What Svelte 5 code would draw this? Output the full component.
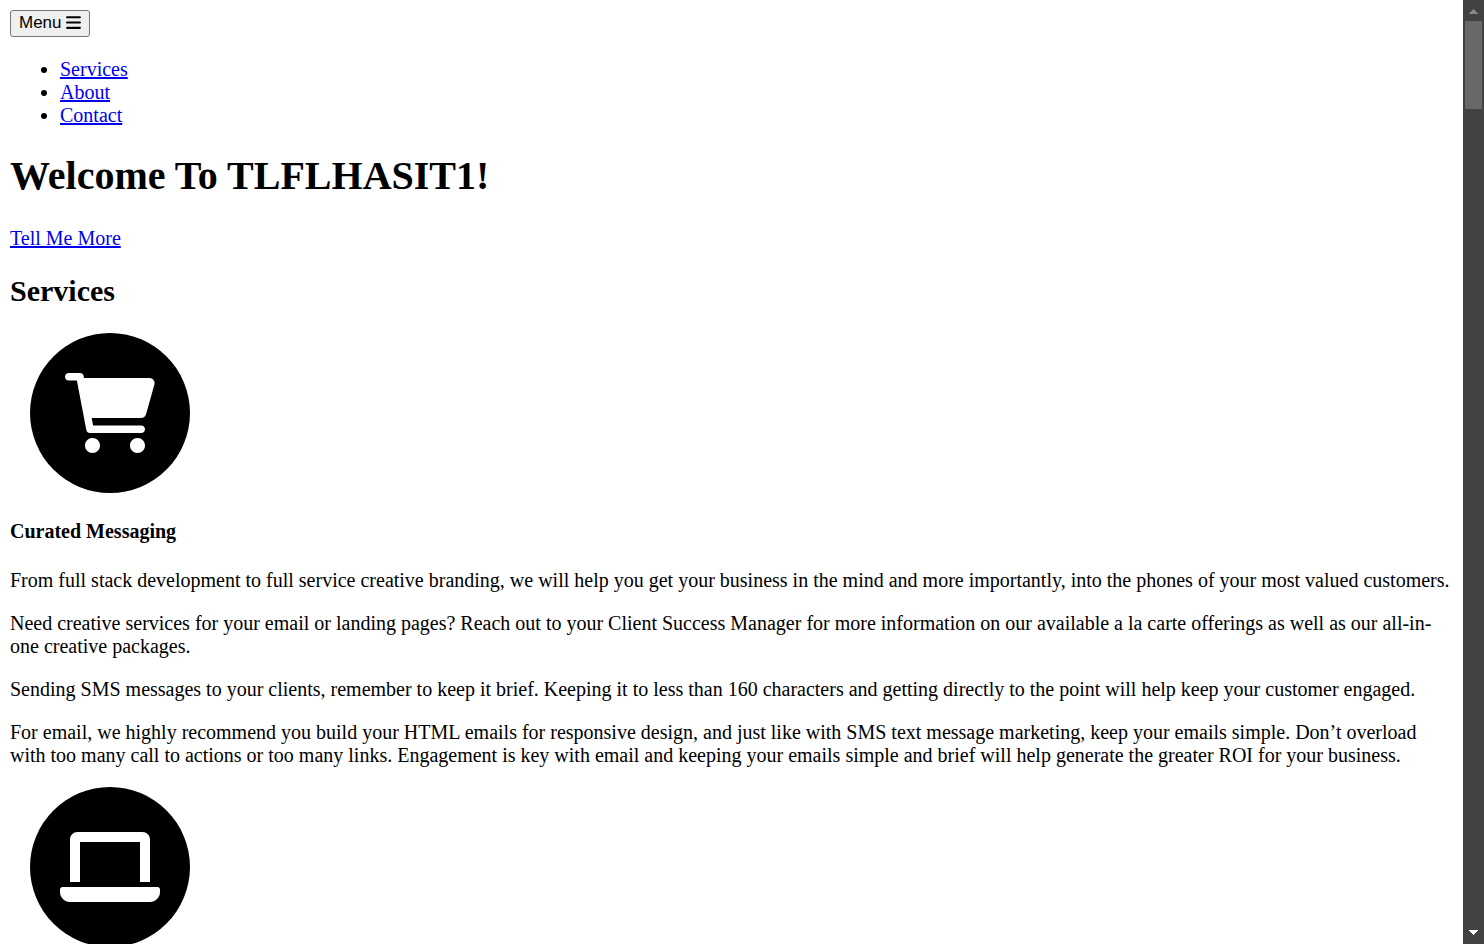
<script>
  const links = ['Services', 'About', 'Contact'];

  const cart =
    'M96 0C107.5 0 117.4 8.19 119.6 19.51L121.1 32H541.8C562.1 32 578.3 52.25 572.6 72.66L518.6 264.7C514.7 278.5 502.1 288 487.8 288H170.7L179.9 336H488C501.3 336 512 346.7 512 360C512 373.3 501.3 384 488 384H159.1C148.5 384 138.6 375.8 136.4 364.5L76.14 48H24C10.75 48 0 37.25 0 24C0 10.75 10.75 0 24 0H96zM128 464C128 437.5 149.5 416 176 416C202.5 416 224 437.5 224 464C224 490.5 202.5 512 176 512C149.5 512 128 490.5 128 464zM512 464C512 490.5 490.5 512 464 512C437.5 512 416 490.5 416 464C416 437.5 437.5 416 464 416C490.5 416 512 437.5 512 464z';
  const laptop =
    'M128 96h384v256h64V80C576 53.63 554.4 32 528 32h-416C85.63 32 64 53.63 64 80V352h64V96zM624 384h-608C7.25 384 0 391.3 0 400V416c0 35.25 28.75 64 64 64h512c35.25 0 64-28.75 64-64v-16C640 391.3 632.8 384 624 384z';
</script>

{#snippet badge(path, width)}
  <svg class="badge" viewBox="0 0 1024 1024" aria-hidden="true">
    <circle cx="512" cy="512" r="512" />
    <path d={path} fill="#fff" transform="translate({512 - width / 2} 256)" />
  </svg>
{/snippet}

<div class="window">
  <div class="page">
    <nav>
      <button type="button">
        Menu
        <svg class="bars" viewBox="0 0 448 512" aria-hidden="true">
          <path d="M0 96C0 78.3 14.3 64 32 64H416a32 32 0 0 1 0 64H32C14.3 128 0 113.7 0 96zM0 256c0-17.7 14.3-32 32-32H416a32 32 0 0 1 0 64H32c-17.7 0-32-14.3-32-32zM448 416c0 17.7-14.3 32-32 32H32a32 32 0 0 1 0-64H416c17.7 0 32 14.3 32 32z" />
        </svg>
      </button>
      <ul>
        {#each links as link}
          <li><a href="#{link.toLowerCase()}">{link}</a></li>
        {/each}
      </ul>
    </nav>

    <header>
      <h1>Welcome To TLFLHASIT1!</h1>
      <a href="#services">Tell Me More</a>
    </header>

    <section id="services">
      <h2>Services</h2>
      {@render badge(cart, 576)}
      <h4>Curated Messaging</h4>
      <p>From full stack development to full service creative branding, we will help you get your business in the mind and more importantly, into the phones of your most valued customers.</p>
      <p>Need creative services for your email or landing pages? Reach out to your Client Success Manager for more information on our available a la carte offerings as well as our all-in-one creative packages.</p>
      <p>Sending SMS messages to your clients, remember to keep it brief. Keeping it to less than 160 characters and getting directly to the point will help keep your customer engaged.</p>
      <p>For email, we highly recommend you build your HTML emails for responsive design, and just like with SMS text message marketing, keep your emails simple. Don’t overload with too many call to actions or too many links. Engagement is key with email and keeping your emails simple and brief will help generate the greater ROI for your business.</p>
      {@render badge(laptop, 640)}
    </section>
  </div>

  <div class="scrollbar" aria-hidden="true">
    <svg class="arrow up" viewBox="0 0 9 5"><path d="M4 0h1v1h1v1h1v1h1v1h1v1H0V4h1V3h1V2h1V1h1z" /></svg>
    <div class="track"><div class="thumb"></div></div>
    <svg class="arrow down" viewBox="0 0 9 5"><path d="M4 5h1V4h1V3h1V2h1V1h1V0H0v1h1v1h1v1h1v1h1z" /></svg>
  </div>
</div>

<style>
  :global(body) {
    margin: 0;
    background: #fff;
  }

  .window {
    display: flex;
    height: 100vh;
    overflow: hidden;
    color: #000;
    font: 20px/23px 'Liberation Serif', 'Times New Roman', serif;
  }

  .page {
    flex: 1;
    min-width: 0;
    padding: 10px;
  }

  button {
    display: flex;
    align-items: center;
    gap: 4px;
    box-sizing: border-box;
    height: 27px;
    padding: 0 8px 2px;
    border: 1px solid #767676;
    border-radius: 3px;
    background: #efefef;
    color: #000;
    font: 17px/20px 'Liberation Sans', Arial, sans-serif;
  }

  .bars {
    width: 15px;
    height: 17px;
  }

  ul {
    margin: 21px 0 26px;
    padding-left: 50px;
  }

  a {
    color: #0000ee;
    text-decoration: underline;
  }

  h1 {
    margin: 26px 0 28px;
    font-size: 40px;
    line-height: 46px;
  }

  h2 {
    margin: 24px 0 25px;
    font-size: 30px;
    line-height: 34px;
  }

  h4 {
    margin: 27px 0 26px;
    font-size: 20px;
  }

  p {
    margin: 20px 0;
  }

  .badge {
    display: block;
    width: 160px;
    height: 160px;
    margin: 0 20px;
  }

  .scrollbar {
    display: flex;
    flex: none;
    flex-direction: column;
    align-items: center;
    box-sizing: border-box;
    width: 21px;
    padding: 9px 2px;
    background: #424242;
  }

  .arrow {
    width: 9px;
    height: 5px;
  }

  .up {
    fill: #868686;
  }

  .down {
    fill: #fff;
  }

  .track {
    flex: 1;
    align-self: stretch;
    padding: 7px 0;
  }

  .thumb {
    height: 88px;
    background: #686868;
  }
</style>
